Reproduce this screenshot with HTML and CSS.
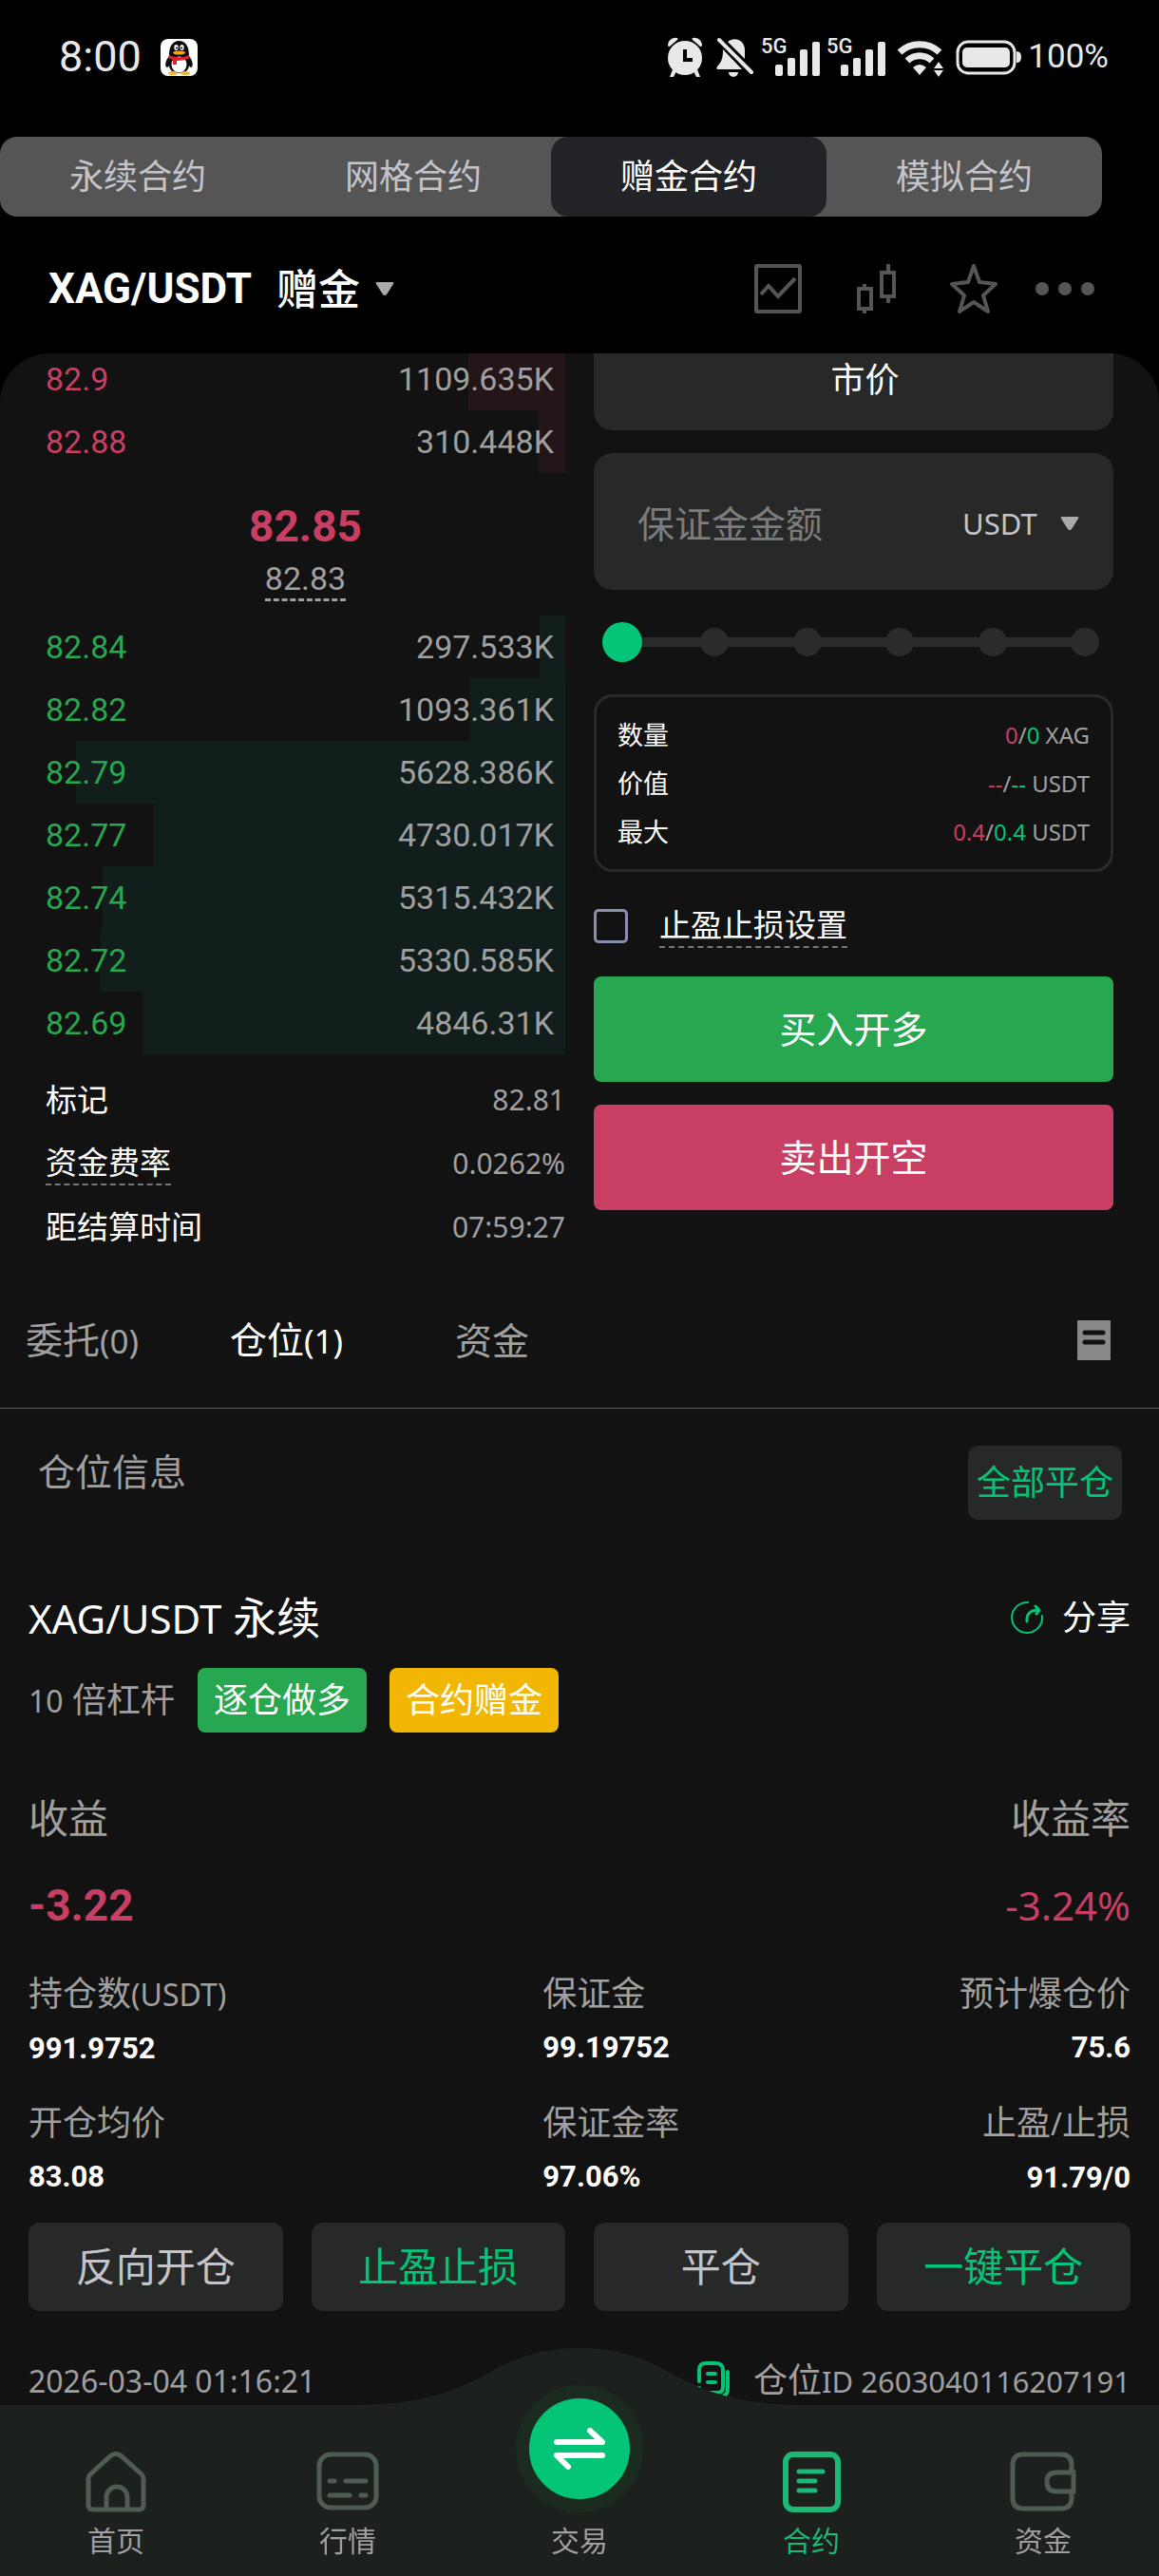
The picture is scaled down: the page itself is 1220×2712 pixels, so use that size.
FILE: index.html
```html
<!DOCTYPE html>
<html lang="zh-CN">
<head>
  <meta charset="UTF-8">
  <meta name="viewport" content="width=device-width, initial-scale=1.0">
  <title>赠金合约 XAG/USDT</title>
  <link rel="stylesheet" href="styles.css">
</head>
<body>
  <!-- 状态栏 -->
  <div class="status-bar">
    <div class="status-left">
      <span class="clock">8:00</span>
      <svg width="39" height="39" viewBox="0 0 39 39">
        <rect width="39" height="39" rx="8" fill="#fff"/>
        <path d="M7 30c-3-1-2-7 2-12 0-11 4-16 10.500-16s10.500 5 10.500 16c4 5 5 11 2 12-1 0-2-2-2-2 0 5-5 8-10.500 8s-10.500-3-10.500-8c0 0-1 2-2 2z" fill="#0b0b0b"/>
        <ellipse cx="19.500" cy="27" rx="8" ry="8.500" fill="#fff"/>
        <ellipse cx="13" cy="36" rx="5" ry="2" fill="#f5b53c"/>
        <ellipse cx="26" cy="36" rx="5" ry="2" fill="#f5b53c"/>
        <ellipse cx="16.500" cy="9" rx="2.200" ry="3" fill="#fff"/>
        <ellipse cx="22.500" cy="9" rx="2.200" ry="3" fill="#fff"/>
        <circle cx="17" cy="9.500" r="1" fill="#000"/>
        <circle cx="22" cy="9.500" r="1" fill="#000"/>
        <ellipse cx="19.500" cy="14.500" rx="6.500" ry="2" fill="#f5a623"/>
        <path d="M9 17c6 3 15 3 21 0l1 3c-4 2-9 3-14 3v4h-4v-5l-5-2z" fill="#e3202c"/>
      </svg>
    </div>
    <div class="status-right">
      <svg width="44" height="42" viewBox="0 0 44 42" fill="#e8e8e8">
        <path d="M0 9a8 8 0 0 1 10-8q1 1 0 2L3 9q-2 2-3 0zM36 9a8 8 0 0 0-10-8q-1 1 0 2l7 6q2 2 3 0z"/>
        <path d="M5 34l4 2-3 6H2zM31 34l-4 2 3 6h4z"/>
        <circle cx="18" cy="22" r="18"/>
        <path d="M18 13v11h8" fill="none" stroke="#000" stroke-width="4"/>
      </svg>
      <svg width="40" height="42" viewBox="0 0 40 42" fill="#e8e8e8">
        <path d="M12 5C19-1 30 3 30 14v9z"/>
        <path d="M7 13l20 21H2c-2 0-2-1-1-3 4-5 6-7 6-18z"/>
        <path d="M13 37h10a5 5 0 0 1-10 0z"/>
        <path d="M3 3l34 34" stroke="#e8e8e8" stroke-width="4" stroke-linecap="round"/>
      </svg>
      <svg class="signal" width="62" height="50" viewBox="0 -4 62 50" fill="#e8e8e8">
        <text x="0" y="17">5G</text>
        <rect x="15" y="29" width="8" height="12" rx="2"/>
        <rect x="28" y="22" width="8" height="19" rx="2"/>
        <rect x="41" y="13" width="8" height="28" rx="2"/>
        <rect x="54" y="5" width="8" height="36" rx="2"/>
      </svg>
      <svg class="signal" width="62" height="50" viewBox="0 -4 62 50" fill="#e8e8e8">
        <text x="0" y="17">5G</text>
        <rect x="15" y="29" width="8" height="12" rx="2"/>
        <rect x="28" y="22" width="8" height="19" rx="2"/>
        <rect x="41" y="13" width="8" height="28" rx="2"/>
        <rect x="54" y="5" width="8" height="36" rx="2"/>
      </svg>
      <svg width="60" height="42" viewBox="0 0 60 42" fill="#e8e8e8">
        <path d="M8 16a31 31 0 0 1 42 0" fill="none" stroke="#e8e8e8" stroke-width="7"/>
        <path d="M16 25a19 19 0 0 1 26 0" fill="none" stroke="#e8e8e8" stroke-width="7"/>
        <path d="M22 32q7-6 14 0l-7 8z"/>
        <path d="M44 33l5-7 5 7zM44 35h10l-5 7z"/>
      </svg>
      <svg width="69" height="42" viewBox="0 0 69 42">
        <rect x="2" y="5" width="60" height="33" rx="11" fill="none" stroke="#e8e8e8" stroke-width="3"/>
        <rect x="7" y="11" width="50" height="21" rx="5" fill="#e8e8e8"/>
        <path d="M64 15q5 0 5 6t-5 6z" fill="#e8e8e8"/>
      </svg>
      <span class="battery-text">100%</span>
    </div>
  </div>

  <!-- 合约类型 -->
  <nav class="type-tabs">
    <button class="type-tab">永续合约</button>
    <button class="type-tab">网格合约</button>
    <button class="type-tab active">赠金合约</button>
    <button class="type-tab">模拟合约</button>
  </nav>

  <!-- 交易对 -->
  <header class="pair-bar">
    <button class="pair-name">
      <span class="pair-symbol">XAG/USDT</span>
      <span>赠金</span>
      <svg width="20" height="16" viewBox="0 0 20 16"><path d="M2 1h16q2 0 1 2l-7 11q-2 2-4 0L1 3q-1-2 1-2z" fill="#aaa"/></svg>
    </button>
    <div class="pair-tools">
      <button aria-label="图表">
        <svg width="50" height="52" viewBox="0 0 50 52" fill="none" stroke="#555" stroke-width="4">
          <rect x="2" y="2" width="46" height="48" rx="1"/>
          <path d="M7 32l8-9 10 11 18-19"/>
        </svg>
      </button>
      <button aria-label="K线">
        <svg width="76" height="52" viewBox="0 0 76 52" fill="none" stroke="#555" stroke-width="4">
          <path d="M20 26h13v21H20zM26 21v5M26 47v5M44 9h13v25H44zM51 0v9M51 34v7"/>
        </svg>
      </button>
      <button aria-label="收藏">
        <svg width="50" height="52" viewBox="0 0 50 52" fill="none" stroke="#555" stroke-width="4" stroke-linejoin="round">
          <path d="M25 2l6 17 17 2-13 12 5 17-15-10-15 10 5-17L2 21l17-2z"/>
        </svg>
      </button>
      <button aria-label="更多">
        <svg width="62" height="52" viewBox="0 0 62 52" fill="#555">
          <circle cx="7" cy="26" r="7"/><circle cx="31" cy="26" r="7"/><circle cx="55" cy="26" r="7"/>
        </svg>
      </button>
    </div>
  </header>

  <main class="panel">
    <div class="trade">
      <!-- 盘口 -->
      <section class="book">
        <table class="depth sell">
          <tr style="--depth: 18.6%"><td>82.9</td><td>1109.635K</td></tr>
          <tr style="--depth: 5.1%"><td>82.88</td><td>310.448K</td></tr>
        </table>
        <div class="price">
          <strong>82.85</strong>
          <span>82.83</span>
        </div>
        <table class="depth buy">
          <tr style="--depth: 4.9%"><td>82.84</td><td>297.533K</td></tr>
          <tr style="--depth: 18.3%"><td>82.82</td><td>1093.361K</td></tr>
          <tr style="--depth: 94.1%"><td>82.79</td><td>5628.386K</td></tr>
          <tr style="--depth: 79.2%"><td>82.77</td><td>4730.017K</td></tr>
          <tr style="--depth: 89%"><td>82.74</td><td>5315.432K</td></tr>
          <tr style="--depth: 89.4%"><td>82.72</td><td>5330.585K</td></tr>
          <tr style="--depth: 81.2%"><td>82.69</td><td>4846.31K</td></tr>
        </table>
        <dl class="rates">
          <div><dt>标记</dt><dd>82.81</dd></div>
          <div><dt><span class="dashed">资金费率</span></dt><dd>0.0262%</dd></div>
          <div><dt>距结算时间</dt><dd>07:59:27</dd></div>
        </dl>
      </section>

      <!-- 下单 -->
      <form class="order">
        <button type="button" class="order-type">市价</button>
        <div class="amount">
          <input type="text" aria-label="保证金金额" placeholder="保证金金额">
          <select aria-label="单位"><option>USDT</option></select>
          <svg width="20" height="16" viewBox="0 0 20 16"><path d="M2 1h16q2 0 1 2l-7 11q-2 2-4 0L1 3q-1-2 1-2z" fill="#aaa"/></svg>
        </div>
        <div class="slider">
          <div class="ticks"><i></i><i></i><i></i><i></i><i></i><i></i></div>
          <input type="range" aria-label="仓位比例" min="0" max="100" value="0">
        </div>
        <dl class="limits">
          <div><dt>数量</dt><dd><span class="red">0</span>/<span class="green">0</span> XAG</dd></div>
          <div><dt>价值</dt><dd><span class="red">--</span>/<span class="green">--</span> USDT</dd></div>
          <div><dt>最大</dt><dd><span class="red">0.4</span>/<span class="green">0.4</span> USDT</dd></div>
        </dl>
        <div class="tpsl">
          <input type="checkbox" id="tpsl">
          <label for="tpsl" class="dashed">止盈止损设置</label>
        </div>
        <button type="button" class="submit buy-btn">买入开多</button>
        <button type="button" class="submit sell-btn">卖出开空</button>
      </form>
    </div>

    <!-- 委托 / 仓位 / 资金 -->
    <div class="record-tabs">
      <button>委托<span class="latin">(0)</span></button>
      <button class="active">仓位<span class="latin">(1)</span></button>
      <button class="funds">资金</button>
      <button class="history" aria-label="历史记录">
        <svg width="35" height="42" viewBox="0 0 35 42">
          <rect width="35" height="42" rx="1" fill="#888"/>
          <path d="M8 13h19M8 23h19" stroke="#121212" stroke-width="5" stroke-linecap="round"/>
        </svg>
      </button>
    </div>

    <div class="position-head">
      <h2>仓位信息</h2>
      <button class="close-all">全部平仓</button>
    </div>

    <!-- 仓位卡片 -->
    <article class="position">
      <div class="position-title">
        <h3><span class="latin">XAG/USDT</span> 永续</h3>
        <button class="share">
          <svg width="35" height="36" viewBox="0 0 35 36" fill="none" stroke="#03c477" stroke-width="2" stroke-linecap="round" stroke-linejoin="round">
            <path d="M18 2a16 16 0 1 0 15 14"/>
            <path d="M17 22c-1-8 4-12 12-12M26 6l4 4-3 4" stroke-width="3"/>
          </svg>
          分享
        </button>
      </div>
      <div class="tags">
        <span class="lever"><span class="latin">10</span> 倍杠杆</span>
        <span class="tag tag-long">逐仓做多</span>
        <span class="tag tag-bonus">合约赠金</span>
      </div>
      <dl class="profit">
        <div><dt>收益</dt><dd class="profit-value">-3.22</dd></div>
        <div><dt>收益率</dt><dd class="profit-rate">-3.24%</dd></div>
      </dl>
      <dl class="details">
        <div><dt>持仓数<span class="latin">(USDT)</span></dt><dd>991.9752</dd></div>
        <div><dt>保证金</dt><dd>99.19752</dd></div>
        <div><dt>预计爆仓价</dt><dd>75.6</dd></div>
        <div><dt>开仓均价</dt><dd>83.08</dd></div>
        <div><dt>保证金率</dt><dd>97.06%</dd></div>
        <div><dt>止盈<span class="latin">/</span>止损</dt><dd>91.79/0</dd></div>
      </dl>
      <div class="actions">
        <button>反向开仓</button>
        <button class="accent">止盈止损</button>
        <button>平仓</button>
        <button class="accent">一键平仓</button>
      </div>
      <div class="meta">
        <time class="latin">2026-03-04 01:16:21</time>
        <span class="position-id">
          <svg width="35" height="42" viewBox="0 0 35 42" fill="none" stroke="#03c477" stroke-width="4" stroke-linecap="round">
            <path d="M2 21V9q0-7 7-7h10q8 0 8 7v18q0 6-6 6H8q-5 0-6-5"/>
            <path d="M32 11v17q0 10-10 10h-4M11 13h8M11 22h8"/>
          </svg>
          <span>仓位<span class="latin">ID 2603040116207191</span></span>
        </span>
      </div>
    </article>
  </main>

  <!-- 底部导航 -->
  <nav class="bottom-nav">
    <svg class="nav-bump" width="480" height="61" viewBox="0 0 480 61"><path d="M0 60C80 60 115 42 145 26 175 8 205 0 240 0s65 8 95 26c30 16 65 34 145 34v1H0z" fill="#1d211d"/></svg>
    <a href="#">
      <svg width="64" height="64" viewBox="0 0 64 64" fill="none" stroke="#4f5c51" stroke-width="5">
        <path d="M3 29q0-3 2-5L26 5q6-5 12 0l21 19q2 2 2 5v27q0 5-5 5H8q-5 0-5-5z"/>
        <path d="M22 61V48a10 10 0 0 1 22 0v13"/>
      </svg>
      首页
    </a>
    <a href="#">
      <svg width="66" height="64" viewBox="0 0 66 64" fill="none" stroke="#4f5c51" stroke-width="5" stroke-linecap="round">
        <rect x="3" y="3" width="60" height="56" rx="12"/>
        <path d="M14 31h5M31 31h21M14 46h21M47 46h5"/>
      </svg>
      行情
    </a>
    <a href="#">
      <span class="swap">
        <svg width="58" height="48" viewBox="0 0 58 48" fill="none" stroke="#fff" stroke-width="6" stroke-linecap="round" stroke-linejoin="round">
          <path d="M5 17h48L40 5M53 31H5l12 12"/>
        </svg>
      </span>
      交易
    </a>
    <a href="#" class="current">
      <svg width="61" height="64" viewBox="0 0 61 64" fill="none" stroke="#1cb878" stroke-width="6" stroke-linecap="round">
        <rect x="3" y="3" width="55" height="58" rx="8"/>
        <path d="M17 21h25M17 31h17M17 41h17" stroke-width="5"/>
      </svg>
      合约
    </a>
    <a href="#">
      <svg width="70" height="64" viewBox="0 0 70 64" fill="none" stroke="#4f5c51" stroke-width="5">
        <path d="M65 22V14Q65 3 54 3H14Q3 3 3 14v35q0 11 11 11h40q11 0 11-11v-7"/>
        <path d="M67 22H49q-10 0-10 10t10 10h18z"/>
      </svg>
      资金
    </a>
  </nav>
</body>
</html>
```

FILE: styles.css
```css
* {
  box-sizing: border-box;
  margin: 0;
  padding: 0;
}

:root {
  --bg: #121212;
  --card: #272928;
  --text: #fff;
  --muted: #a0a0a0;
  --green: #27a74f;
  --accent: #03c477;
  --red: #c83f63;
}

body {
  background: #000;
  color: var(--text);
  font-family: "Noto Sans", "Noto Sans CJK SC", sans-serif;
  font-size: 36px;
  line-height: 54px;
  min-height: 100vh;
  display: flex;
  flex-direction: column;
}

button, input, select {
  font: inherit;
  color: inherit;
  background: none;
  border: none;
  outline: none;
}

button {
  cursor: pointer;
}

svg {
  display: block;
  flex: none;
}

.latin {
  font-size: 32px;
}

.red {
  color: var(--red);
}

.green {
  color: var(--accent);
}

/* 状态栏 */
.status-bar {
  display: flex;
  justify-content: space-between;
  align-items: center;
  height: 144px;
  padding: 0 53px 24px 62px;
  font-family: Roboto, sans-serif;
  color: #e8e8e8;
}

.status-left {
  display: flex;
  align-items: center;
  gap: 20px;
}

.clock {
  font-size: 45px;
}

.status-right {
  display: flex;
  align-items: center;
  gap: 7px;
}

.signal {
  font-size: 22px;
  font-weight: 500;
  overflow: visible;
}

.battery-text {
  font-size: 35px;
}

/* 合约类型 */
.type-tabs {
  display: grid;
  grid-template-columns: repeat(4, 1fr);
  margin-right: 60px;
  border-radius: 18px;
  background: #555;
}

.type-tab {
  height: 84px;
  border-radius: 18px;
  color: #c4c4cb;
}

.type-tab.active {
  background: #222327;
  color: #fff;
}

/* 交易对 */
.pair-bar {
  display: flex;
  justify-content: space-between;
  align-items: center;
  height: 144px;
  padding: 8px 68px 0 51px;
}

.pair-name {
  display: flex;
  align-items: center;
  gap: 16px;
  font-size: 44px;
  font-weight: 500;
}

.pair-symbol {
  margin-right: 10px;
  font-family: Roboto, sans-serif;
  font-weight: 700;
}

.pair-tools {
  display: flex;
  gap: 40px;
}

.panel {
  flex: 1;
  overflow: hidden;
  padding-bottom: 180px;
  border-radius: 52px 52px 0 0;
  background: var(--bg);
}

/* 内容已滚动到交易对栏下方 */
.trade {
  display: grid;
  grid-template-columns: repeat(2, minmax(0, 1fr));
  gap: 30px;
  margin-top: -20px;
  padding: 0 48px;
}

.book {
  padding-top: 14px;
}

.depth {
  width: 100%;
  border-collapse: collapse;
  font-family: Roboto, sans-serif;
  font-size: 34px;
}

.depth tr {
  background: linear-gradient(var(--bar), var(--bar)) right / var(--depth) 100% no-repeat;
}

.depth td {
  height: 66px;
  color: var(--muted);
}

.depth td:first-child {
  color: var(--side);
}

.depth td:last-child {
  padding-right: 12px;
  text-align: right;
}

.sell {
  --side: var(--red);
  --bar: #241618;
}

.buy {
  --side: var(--green);
  --bar: #121e1b;
}

.price {
  display: flex;
  flex-direction: column;
  align-items: center;
  height: 150px;
  padding-top: 26px;
  font-family: Roboto, sans-serif;
}

.price strong {
  font-size: 46px;
  line-height: 60px;
  color: var(--red);
}

.price span {
  margin-top: 4px;
  font-size: 34px;
  line-height: 42px;
  color: var(--muted);
  border-bottom: 3px dashed var(--muted);
}

.dashed {
  border-bottom: 2px dashed #777;
}

.rates {
  margin-top: 14px;
}

.rates div {
  display: flex;
  justify-content: space-between;
  align-items: center;
  height: 67px;
}

.rates dt {
  font-size: 33px;
}

.rates .dashed {
  display: block;
  line-height: 44px;
}

.rates dd {
  font-size: 30px;
  color: var(--muted);
}

/* 下单 */
.order {
  display: flex;
  flex-direction: column;
}

.order-type {
  height: 101px;
  padding: 0 0 6px 24px;
  border-radius: 0 0 20px 20px;
  background: var(--card);
}

.amount {
  display: flex;
  align-items: center;
  height: 144px;
  margin-top: 24px;
  padding: 4px 36px 0 46px;
  border-radius: 20px;
  background: var(--card);
}

.amount input {
  flex: 1;
  min-width: 0;
  font-size: 39px;
}

.amount input::placeholder {
  color: #7c7c7c;
}

.amount select {
  appearance: none;
  margin-right: 24px;
  font-size: 31px;
  color: #c4c4cb;
}

.slider {
  display: grid;
  align-items: center;
  height: 110px;
  padding: 0 9px;
}

.ticks, .slider input {
  grid-area: 1 / 1;
}

.ticks {
  display: flex;
  justify-content: space-between;
  padding: 0 6px;
  background: linear-gradient(#2a2b2b, #2a2b2b) center / 92% 10px no-repeat;
}

.ticks i {
  width: 30px;
  height: 30px;
  border-radius: 50%;
  background: #2a2b2b;
}

.slider input {
  appearance: none;
  width: 100%;
}

.slider input::-webkit-slider-thumb {
  appearance: none;
  width: 42px;
  height: 42px;
  border-radius: 50%;
  background: var(--accent);
}

.slider input::-moz-range-thumb {
  width: 42px;
  height: 42px;
  border: none;
  border-radius: 50%;
  background: var(--accent);
}

.limits {
  padding: 14px 22px;
  border: 3px solid #2b2b2b;
  border-radius: 20px;
}

.limits div {
  display: flex;
  justify-content: space-between;
  align-items: center;
  height: 51px;
}

.limits dt {
  font-size: 27px;
}

.limits dd {
  font-size: 24px;
  color: var(--muted);
}

.tpsl {
  display: flex;
  align-items: center;
  gap: 33px;
  height: 110px;
  padding-top: 4px;
}

.tpsl input {
  appearance: none;
  width: 36px;
  height: 36px;
  border: 3px solid #8b8fae;
  border-radius: 5px;
}

.tpsl input:checked {
  background: var(--accent);
}

.tpsl label {
  font-size: 33px;
  line-height: 44px;
}

.submit {
  height: 111px;
  padding-bottom: 2px;
  border-radius: 8px;
  font-size: 39px;
}

.buy-btn {
  background: var(--green);
}

.sell-btn {
  margin-top: 24px;
  background: var(--red);
}

/* 委托 / 仓位 / 资金 */
.record-tabs {
  display: flex;
  align-items: center;
  gap: 96px;
  height: 142px;
  margin-top: 16px;
  padding: 0 51px 2px 27px;
  border-bottom: 1px solid #5a5a5a;
  font-size: 39px;
}

.record-tabs button {
  color: var(--muted);
}

.record-tabs .latin {
  font-size: 35px;
}

.record-tabs button.active {
  color: #fff;
}

.record-tabs .funds {
  padding-left: 22px;
}

.record-tabs .history {
  margin-left: auto;
}

.position-head {
  display: flex;
  justify-content: space-between;
  align-items: flex-start;
  padding: 39px 39px 0 40px;
}

.position-head h2 {
  font-size: 39px;
  font-weight: 400;
  color: var(--muted);
}

.close-all {
  height: 78px;
  padding: 0 9px;
  border-radius: 10px;
  background: var(--card);
  color: var(--accent);
}

/* 仓位卡片 */
.position {
  padding: 71px 30px 0;
}

.position-title {
  display: flex;
  justify-content: space-between;
  align-items: center;
  height: 64px;
}

.position-title h3 {
  font-size: 46px;
  font-weight: 400;
}

.position-title .latin {
  font-size: 42px;
}

.share {
  display: flex;
  align-items: center;
  gap: 19px;
}

.tags {
  display: flex;
  align-items: center;
  gap: 24px;
  margin-top: 21px;
}

.lever {
  color: var(--muted);
}

.tag {
  padding: 7px 17px;
  border-radius: 8px;
}

.tag-long {
  background: var(--green);
}

.tag-bonus {
  background: #f2b705;
}

.profit {
  display: flex;
  justify-content: space-between;
  margin-top: 60px;
}

.profit div:last-child {
  text-align: right;
}

.profit dt {
  font-size: 42px;
  line-height: 60px;
  color: var(--muted);
}

.profit dd {
  margin-top: 32px;
  line-height: 60px;
  color: var(--red);
}

.profit-value {
  font-family: Roboto, sans-serif;
  font-size: 46px;
  font-weight: 700;
}

.profit-rate {
  font-size: 42px;
}

.details {
  display: grid;
  grid-template-columns: 7fr 4fr 4fr;
  row-gap: 21px;
  margin-top: 36px;
}

.details div:nth-child(3n) {
  text-align: right;
}

.details dt {
  color: var(--muted);
}

.details dd {
  font-family: Roboto, sans-serif;
  font-size: 31px;
  font-weight: 700;
  line-height: 60px;
}

.actions {
  display: grid;
  grid-template-columns: repeat(4, 1fr);
  gap: 30px;
  margin-top: 17px;
}

.actions button {
  height: 93px;
  padding-bottom: 2px;
  border-radius: 12px;
  background: var(--card);
  font-size: 42px;
  color: #c4c4cb;
}

.actions .accent {
  color: var(--accent);
}

.meta {
  display: flex;
  justify-content: space-between;
  align-items: center;
  margin-top: 46px;
  color: var(--muted);
}

.position-id {
  display: flex;
  align-items: center;
  gap: 24px;
}

.position-id .latin {
  font-size: 31px;
}

/* 底部导航 */
.bottom-nav {
  position: fixed;
  right: 0;
  bottom: 0;
  left: 0;
  display: grid;
  grid-template-columns: repeat(5, 1fr);
  grid-template-rows: 100%;
  height: 180px;
  background: #1d211d;
}

.nav-bump {
  position: absolute;
  bottom: 100%;
  left: 50%;
  margin: 0 0 -1px -240px;
}

.bottom-nav a {
  position: relative;
  display: flex;
  flex-direction: column;
  justify-content: flex-end;
  align-items: center;
  gap: 12px;
  padding-bottom: 19px;
  font-size: 30px;
  line-height: 36px;
  color: var(--muted);
  text-decoration: none;
}

.bottom-nav .current {
  color: #1cb878;
}

.swap {
  display: flex;
  flex: none;
  justify-content: center;
  align-items: center;
  width: 134px;
  height: 134px;
  border: 14px solid #1b2b1f;
  border-radius: 50%;
  background: var(--accent);
}
```
